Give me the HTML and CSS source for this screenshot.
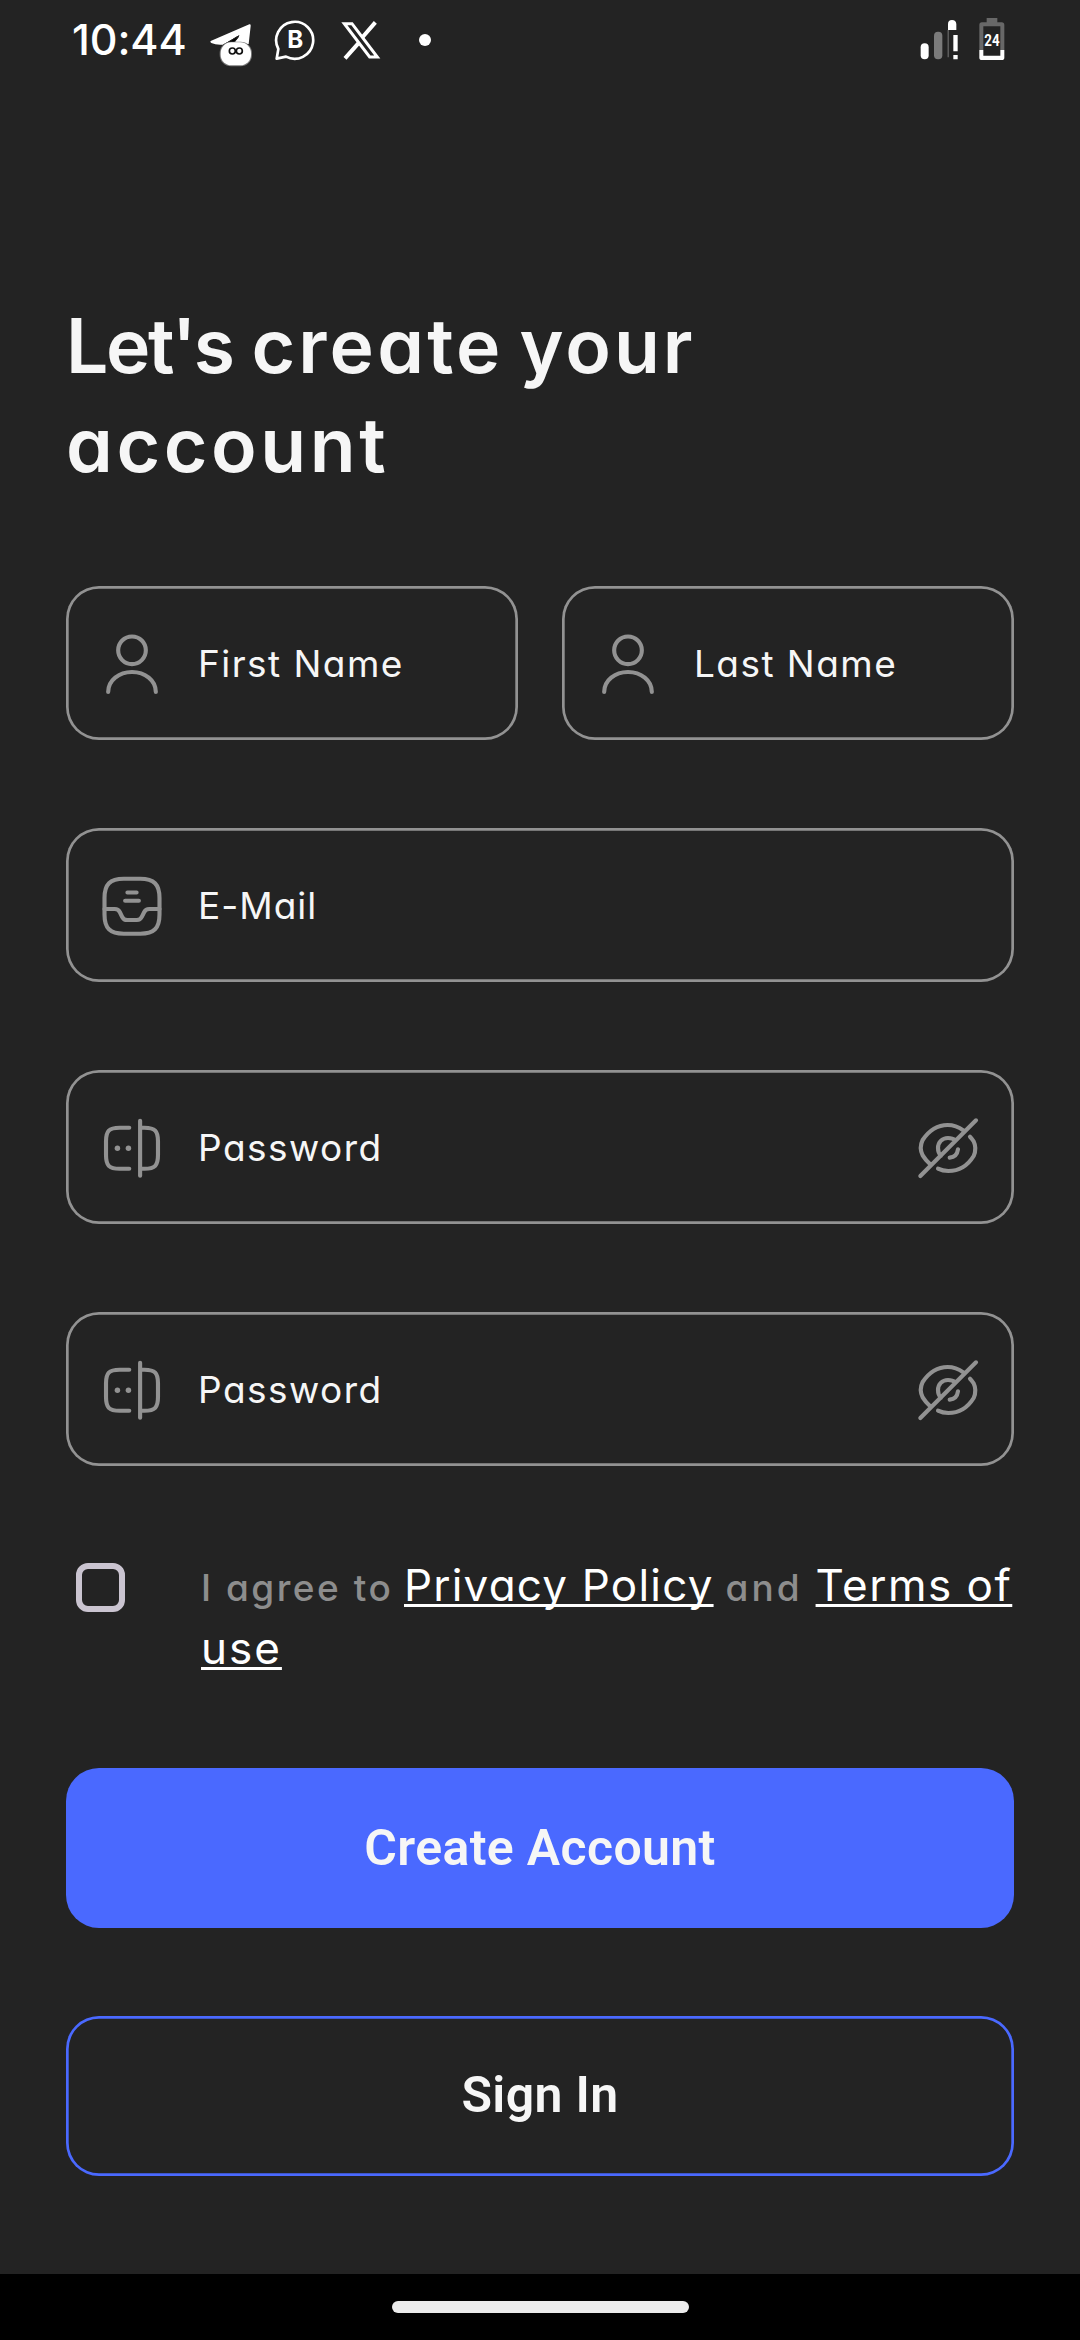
FILE: index.html
```html
<!DOCTYPE html>
<html lang="en">
<head>
<meta charset="utf-8">
<title>Create account</title>
<link rel="stylesheet" href="styles.css">
</head>
<body>
<svg class="defs" aria-hidden="true">
  <symbol id="user" viewBox="147 180 198 198"><g class="line12"><circle cx="246" cy="241" r="41.5"/><path d="M174.500 366C174.500 331 207 306 246 306S317.500 331 317.500 366"/></g></symbol>
  <symbol id="mail" viewBox="0 -.45 24 24"><g class="line"><path d="M9 22h6c5 0 7-2 7-7V9c0-5-2-7-7-7H9C4 2 2 4 2 9v6c0 5 2 7 7 7z"/><path d="M2 13h3.760c.76 0 1.450.43 1.790 1.110l.89 1.790c.56 1.100 1.560 1.100 1.800 1.100h3.530c.76 0 1.450-.43 1.790-1.110l.89-1.790c.34-.68 1.030-1.110 1.790-1.110H22M10.340 7h3.330M9.500 10h5"/></g></symbol>
  <symbol id="pass" viewBox="0 -.45 24 24"><g class="line"><path d="M11 19.450H7.500C3.600 19.450 2.550 18.300 2.550 14.500v-5c0-3.800 1.050-4.950 4.950-4.950H11M15 4.550h1.500c3.900 0 4.950 1.150 4.950 4.950v5c0 3.800-1.050 4.950-4.950 4.950H15M14.950 2v20"/></g><circle cx="6.700" cy="12" r="1" fill="#929292"/><circle cx="10.700" cy="12" r="1" fill="#929292"/></symbol>
  <symbol id="eye" viewBox="105 162 198 198"><g class="line12"><path d="M121 348L288 181M250 211C232 198 214 195 203 195C165 195 140 222 128 240C120 256 121 272 128 286C134 296 142 305 152 314M174 326C184 331 194 333 205 333C243 333 268 309 281 288C287 274 287 256 281 244C277 238 274 234 270 230M226 241C220 236 213 234 204 234C186 234 174 247 174 264C174 274 177 282 183 287M234 268C232 283 222 292 209 293"/></g></symbol>
</svg>

<header class="status">
  <span class="clock">10:44</span>
  <svg class="telegram" width="46" height="90" viewBox="474 0 138 270">
    <path fill="#fff" d="M482 123L598 73Q603 71 602 78L596 132L550 132L566 112L563 108L520 134Q498 136 484 129Q479 126 482 123Z"/>
    <path stroke="#232323" stroke-width="3" d="M518 136L567 107L548 133"/>
    <rect x="509" y="125" width="97" height="74" rx="34" fill="#777"/>
    <rect x="512" y="127" width="91" height="69" rx="32" fill="#fff"/>
    <g fill="none" stroke="#111" stroke-width="5"><circle cx="547" cy="153" r="9"/><circle cx="568" cy="153" r="9"/></g>
  </svg>
  <svg class="business" width="44" height="90" viewBox="670 0 132 270">
    <path fill="none" stroke="#fff" stroke-width="8" stroke-linejoin="round" d="M681 176L686 147A55.500 55.500 0 1 1 709 170Z"/>
    <text class="badge-b" x="713" y="145" textLength="48" lengthAdjust="spacingAndGlyphs">B</text>
  </svg>
  <svg class="x-app" width="40" height="90" viewBox="872 0 120 270">
    <path fill="none" stroke="#fff" stroke-width="9" d="M882 71H905L981 171H958Z"/>
    <path stroke="#fff" stroke-width="12" d="M975 67L937 111M924 130L884 175"/>
  </svg>
  <i class="more"></i>
  <svg class="signal" width="40" height="90" viewBox="118 0 120 270">
    <rect x="120" y="130" width="24" height="48" rx="12" fill="#fff"/>
    <rect x="160" y="95" width="25" height="83" rx="12" fill="#7b7b7b"/>
    <path fill="#fff" d="M202 90V72Q202 60 214 60T227 72V90ZM218 105H231V154H218ZM218 165H231V178H218Z"/>
    <path fill="#777" d="M201 90h3v82h-3z"/>
  </svg>
  <svg class="battery" width="26" height="90" viewBox="293 0 78 270">
    <path fill="#686868" d="M316 54H348V67H361Q369 67 369 75V150H357V79H306V150H294V75Q294 67 302 67H316Z"/>
    <path fill="#fff" d="M294 150H306V167H357V150H369V173Q369 180 361 180H302Q294 180 294 173Z"/>
    <text class="level" x="309" y="138" textLength="46" lengthAdjust="spacingAndGlyphs">24</text>
  </svg>
</header>

<main class="form">
  <h1><span class="lets">Let's</span> <span class="create">create</span> <span class="your">your</span><br><span class="account">account</span></h1>
  <div class="names">
    <label class="field"><svg class="icon"><use href="#user"/></svg><span>First Name</span></label>
    <label class="field"><svg class="icon"><use href="#user"/></svg><span>Last Name</span></label>
  </div>
  <label class="field"><svg class="icon"><use href="#mail"/></svg><span class="email">E-Mail</span></label>
  <label class="field"><svg class="icon"><use href="#pass"/></svg><span>Password</span><svg class="icon"><use href="#eye"/></svg></label>
  <label class="field"><svg class="icon"><use href="#pass"/></svg><span>Password</span><svg class="icon"><use href="#eye"/></svg></label>
  <div class="agree">
    <i class="check"></i>
    <p><span class="muted to">I agree to</span><a class="privacy">Privacy Policy</a><span class="muted and">and</span><a class="terms">Terms of</a><br><a class="use">use</a></p>
  </div>
  <button class="primary">Create Account</button>
  <button class="outline">Sign In</button>
</main>
<footer class="nav"><i class="handle"></i></footer>
</body>
</html>
```
FILE: styles.css
```css
* { box-sizing: border-box; }
body {
  margin: 0;
  width: 1080px;
  height: 2340px;
  display: flex;
  flex-direction: column;
  overflow: hidden;
  background: #232323;
  color: #f6f6f6;
  font-family: Inter, sans-serif;
  font-feature-settings: "cv11";
}
svg { display: block; flex: none; }
.defs { width: 0; height: 0; position: absolute; }
.line, .line12 { fill: none; stroke: #929292; stroke-linecap: round; stroke-linejoin: round; }
.line { stroke-width: 1.5; }
.line12 { stroke-width: 12.4; }

.status { height: 90px; padding: 0 75px 0 72px; display: flex; align-items: center; }
.clock { width: 136px; font-size: 43px; font-weight: 500; line-height: 90px; letter-spacing: -.1px; padding-bottom: 12px; color: #fff; white-space: nowrap; }
.business { margin-left: 19px; }
.x-app { margin-left: 24px; }
.more { width: 12px; height: 12px; margin: 0 auto 10px 38px; border-radius: 50%; background: #fff; }
.battery { margin-left: 19px; }
.badge-b { font: 700 72px Inter, sans-serif; fill: #fff; }
.level { font: 700 47px Roboto, sans-serif; fill: #fff; }

.form { padding: 206px 66px 0; }
h1 { margin: 0 0 92px; height: 198px; font-size: 75px; font-weight: 600; line-height: 99px; white-space: nowrap; }
.lets { letter-spacing: -2.4px; }
.create { letter-spacing: 3.2px; }
.your { letter-spacing: 3px; margin-left: -3px; }
.account { letter-spacing: 3.6px; }
.names { display: flex; gap: 44px; }
.names .field { flex: 1; }
.field {
  display: flex;
  align-items: center;
  height: 154px;
  margin-bottom: 88px;
  padding: 0 33px;
  border-radius: 33px;
  box-shadow: inset 0 0 0 2.7px #929292;
}
.field span { flex: 1; padding-left: 33px; font-size: 37px; letter-spacing: 1.45px; white-space: nowrap; }
.field .email { letter-spacing: 1px; }
.icon { width: 66px; height: 66px; }

.agree { display: flex; height: 126px; margin-bottom: 88px; padding-left: 10px; }
.check { width: 49px; height: 49px; margin-top: 9px; border: 6px solid #cac4d0; border-radius: 12px; }
.agree p { margin: 0 0 0 76px; font-size: 44px; line-height: 63px; white-space: nowrap; color: #fff; }
.agree a { text-decoration: underline; text-decoration-thickness: 2.7px; text-underline-offset: 3px; text-decoration-skip-ink: none; }
.muted { display: inline-block; font-size: 37px; font-weight: 500; line-height: 1; color: #8d8d8d; }
.to { width: 203px; letter-spacing: 2.5px; }
.privacy { letter-spacing: 1.2px; }
.and { width: 102px; padding-left: 12px; letter-spacing: 3px; }
.terms { letter-spacing: 1.5px; }
.use { letter-spacing: 2px; }

button { display: block; width: 100%; height: 160px; border: 0; border-radius: 33px; padding: 0 0 1px; background: none; color: #f6f6f6; font: 600 50px Roboto, sans-serif; letter-spacing: .35px; }
.primary { margin-bottom: 88px; background: #4a69ff; }
.outline { padding-bottom: 2px; box-shadow: inset 0 0 0 2.7px #4a69ff; }

.nav { margin-top: auto; height: 66px; display: flex; justify-content: center; align-items: center; background: #000; }
.handle { width: 297px; height: 12px; border-radius: 6px; background: #ececec; }
```
